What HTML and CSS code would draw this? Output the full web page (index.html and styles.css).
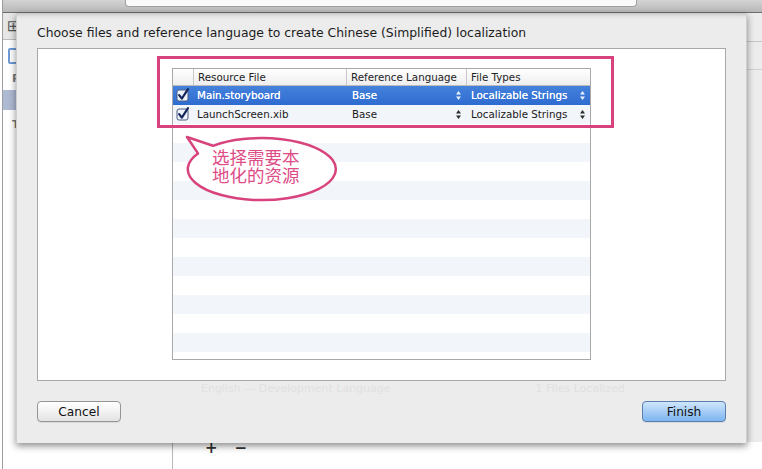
FILE: index.html
```html
<!DOCTYPE html>
<html lang="en">
<head>
    <meta charset="UTF-8" />
    <title>Localization</title>
    <link rel="stylesheet" href="styles.css">
</head>
<body>
    <div class="app">
        <div class="toolbar">
            <div class="activity"></div>
        </div>
        <div class="workspace">
            <aside class="navigator">
                <div class="nav-tabs">&#8862;</div>
                <div class="nav-filter"><span class="filter-field"></span></div>
                <div class="nav-group">PROJECT</div>
                <div class="nav-row selected">Demo</div>
                <div class="nav-group">TARGETS</div>
                <div class="nav-row">Demo</div>
            </aside>
            <main class="editor">
                <div class="editor-pane">
                    <div class="pane-head"></div>
                    <div class="pane-row"></div>
                </div>
                <div class="editor-footer">
                    <span>+</span>
                    <span>&minus;</span>
                </div>
            </main>
        </div>
    </div>

    <div class="sheet">
        <div class="sheet-title">Choose files and reference language to create Chinese (Simplified) localization</div>
        <div class="files-box">
            <div class="file-table">
                <div class="table-head">
                    <div class="th"></div>
                    <div class="th">Resource File</div>
                    <div class="th">Reference Language</div>
                    <div class="th">File Types</div>
                </div>
                <div class="table-body">
                    <div class="tr selected">
                        <div class="td check">
                            <svg width="14" height="14" viewBox="0 0 14 14"><rect x="1" y="2" width="11" height="11" rx="2" fill="#eef3fb" stroke="#4b5f82"/><path d="M3.2 7.2 L5.8 10.6 L12 1.2" fill="none" stroke="#14265a" stroke-width="2.2" stroke-linecap="round" stroke-linejoin="round"/></svg>
                        </div>
                        <div class="td">Main.storyboard</div>
                        <div class="td popup">Base <svg class="updown" width="5" height="9" viewBox="0 0 5 9"><path d="M0 3.5 L2.5 0 L5 3.5Z M0 5.5 L2.5 9 L5 5.5Z"/></svg></div>
                        <div class="td popup">Localizable Strings <svg class="updown" width="5" height="9" viewBox="0 0 5 9"><path d="M0 3.5 L2.5 0 L5 3.5Z M0 5.5 L2.5 9 L5 5.5Z"/></svg></div>
                    </div>
                    <div class="tr">
                        <div class="td check">
                            <svg width="14" height="14" viewBox="0 0 14 14"><rect x="1" y="2" width="11" height="11" rx="2" fill="#eef3fb" stroke="#4b5f82"/><path d="M3.2 7.2 L5.8 10.6 L12 1.2" fill="none" stroke="#14265a" stroke-width="2.2" stroke-linecap="round" stroke-linejoin="round"/></svg>
                        </div>
                        <div class="td">LaunchScreen.xib</div>
                        <div class="td popup">Base <svg class="updown" width="5" height="9" viewBox="0 0 5 9"><path d="M0 3.5 L2.5 0 L5 3.5Z M0 5.5 L2.5 9 L5 5.5Z"/></svg></div>
                        <div class="td popup">Localizable Strings <svg class="updown" width="5" height="9" viewBox="0 0 5 9"><path d="M0 3.5 L2.5 0 L5 3.5Z M0 5.5 L2.5 9 L5 5.5Z"/></svg></div>
                    </div>
                </div>
            </div>
        </div>
        <div class="sheet-status">
            <span>English &mdash; Development Language</span>
            <span class="status-count">1 Files Localized</span>
        </div>
        <div class="sheet-buttons">
            <button class="btn">Cancel</button>
            <button class="btn default">Finish</button>
        </div>
    </div>

    <div class="note-frame"></div>
    <svg class="note-bubble" width="762" height="469" viewBox="0 0 762 469">
        <path d="M213 145.8 L187 137 L198 153.4 A74 31 0 1 0 213 145.8 Z" fill="rgba(255,255,255,0.9)" stroke="#d8437d" stroke-width="2.5" stroke-linejoin="round"/>
    </svg>
    <div class="note-text">
        <div class="note-line">选择需要本</div>
        <div class="note-line">地化的资源</div>
    </div>
</body>
</html>
```

FILE: styles.css
```css
body {
    margin: 0;
    width: 762px;
    height: 469px;
    overflow: hidden;
    background: #fff;
    font-family: "DejaVu Sans", sans-serif;
    color: #1a1a1a;
}
.app {
    display: flex;
    flex-direction: column;
    height: 469px;
    margin-left: 2px;
    border-left: 1px solid #9d9d9d;
}
.toolbar {
    height: 12px;
    flex-shrink: 0;
    display: flex;
    padding-left: 122px;
    background: linear-gradient(#d3d3d3, #b8b8b8);
    border-bottom: 1px solid #6c6c6c;
}
.activity {
    width: 510px;
    height: 6px;
    background: #fbfbfb;
    border: 1px solid #9f9f9f;
    border-top: none;
    border-radius: 0 0 4px 4px;
}
.workspace {
    flex: 1;
    display: flex;
}
.navigator {
    width: 169px;
    border-right: 1px solid #b9b9b9;
    font-size: 11px;
}
.nav-tabs {
    height: 26px;
    padding-left: 4px;
    font-size: 15px;
    line-height: 26px;
    color: #555;
    background: #e6e6e6;
    border-bottom: 1px solid #bdbdbd;
}
.nav-filter {
    height: 24px;
    padding: 8px 0 0 5px;
    box-sizing: border-box;
}
.filter-field {
    display: block;
    width: 150px;
    height: 12px;
    border: 2px solid #6f9ad8;
    border-radius: 2px;
}
.nav-group {
    height: 26px;
    padding-left: 9px;
    line-height: 30px;
    font-weight: bold;
    color: #7b7b7b;
}
.nav-row {
    height: 20px;
    padding-left: 30px;
    line-height: 20px;
}
.nav-row.selected {
    background: #aeb9d2;
}
.editor {
    flex: 1;
    display: flex;
    flex-direction: column;
}
.editor-pane {
    flex: 1;
    background: #ececec;
}
.pane-head {
    height: 28px;
    border-bottom: 1px solid #c6c6c6;
}
.pane-row {
    height: 27px;
    border-bottom: 1px solid #d0d0d0;
}
.editor-footer {
    height: 27px;
    display: flex;
    gap: 17px;
    padding: 0 0 0 32px;
    font-size: 15px;
    font-weight: bold;
    line-height: 13px;
    color: #333;
}

.sheet {
    position: absolute;
    left: 16px;
    top: 13px;
    width: 731px;
    height: 430px;
    box-sizing: border-box;
    display: flex;
    flex-direction: column;
    background: #ececec;
    border-left: 1px solid #cfcfcf;
    border-right: 1px solid #cfcfcf;
    box-shadow: 0 3px 7px rgba(0, 0, 0, 0.45), inset 0 6px 5px -5px rgba(0, 0, 0, 0.25);
}
.sheet-title {
    height: 35px;
    padding: 13px 0 0 20px;
    box-sizing: border-box;
    font-size: 12.4px;
    line-height: 14px;
    color: #1c1c1c;
}
.files-box {
    height: 333px;
    margin: 0 20px;
    box-sizing: border-box;
    padding: 19px 134px 20px;
    background: #fff;
    border: 1px solid #a8a8a8;
}
.file-table {
    height: 292px;
    box-sizing: border-box;
    display: flex;
    flex-direction: column;
    border: 1px solid #a9a9a9;
    font-size: 10.3px;
}
.table-head,
.tr {
    display: grid;
    grid-template-columns: 20px 153px 120px 1fr;
}
.table-head {
    height: 16px;
    line-height: 16px;
    background: linear-gradient(#ffffff, #eeeeee);
    border-bottom: 1px solid #bcbcbc;
    color: #222;
}
.th + .th {
    border-left: 1px solid #c8c8c8;
    padding-left: 4px;
}
.table-body {
    flex: 1;
    background: repeating-linear-gradient(#ffffff 0 19px, #f2f5fa 19px 38px);
}
.tr {
    height: 19px;
    line-height: 19px;
}
.td {
    padding-left: 4px;
    white-space: nowrap;
}
.td.check {
    padding: 2px 0 0 3px;
}
.td.check svg {
    display: block;
}
.td.popup {
    display: flex;
    align-items: center;
    justify-content: space-between;
    padding: 0 5px 0 6px;
}
.td.popup + .td.popup {
    padding-left: 5px;
}
.updown {
    fill: #2c2c2c;
}
.tr.selected {
    background: linear-gradient(#4582dc, #2e6bd0);
    color: #fff;
    text-shadow: 0 0 0.3px #fff;
}
.tr.selected .updown {
    fill: #e8f0ff;
}

.sheet-status {
    height: 20px;
    display: flex;
    padding-left: 184px;
    font-size: 11px;
    line-height: 16px;
    color: #e1e1e1;
}
.status-count {
    margin-left: 145px;
}
.sheet-buttons {
    display: flex;
    justify-content: space-between;
    padding: 0 20px;
}
.btn {
    width: 84px;
    height: 21px;
    padding: 0;
    font-family: "DejaVu Sans", sans-serif;
    font-size: 12.2px;
    color: #111;
    background: linear-gradient(#ffffff, #f2f2f2 50%, #e3e3e3);
    border: 1px solid #959595;
    border-radius: 4px;
    box-shadow: 0 1px 0 rgba(0, 0, 0, 0.08);
}
.btn.default {
    background: linear-gradient(#cfe6fc, #a6cdf6 50%, #7cb6f0);
    border-color: #5a7fb0;
}

.note-frame {
    position: absolute;
    left: 157px;
    top: 56px;
    width: 451px;
    height: 66px;
    border: 3px solid #d8437d;
}
.note-bubble {
    position: absolute;
    left: 0;
    top: 0;
}
.note-text {
    position: absolute;
    left: 212px;
    top: 148px;
    font-family: "Noto Sans CJK SC", sans-serif;
    font-size: 17.5px;
    color: #de4c86;
}
.note-line {
    height: 18px;
    line-height: 18px;
}
```
